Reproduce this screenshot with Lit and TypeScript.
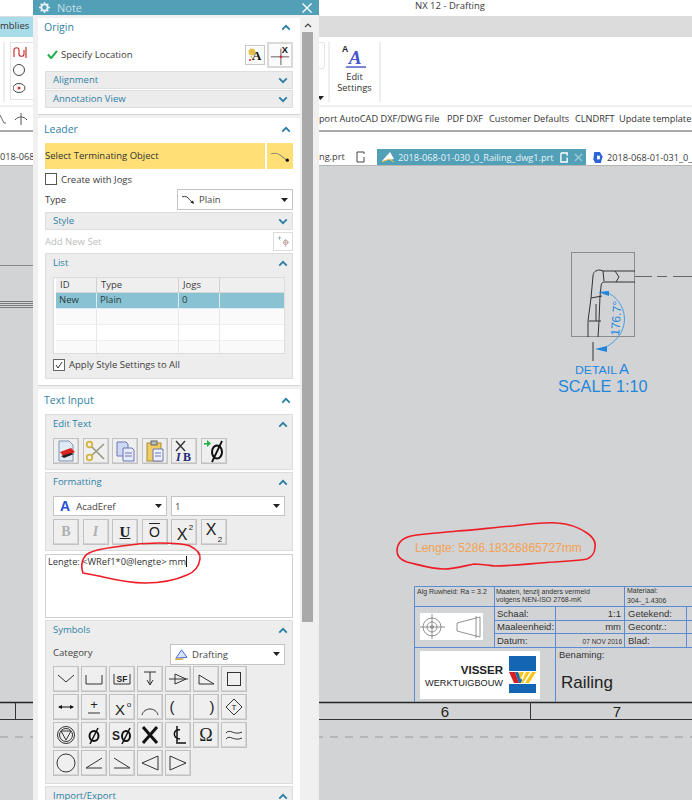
import { LitElement, html, css, svg } from "lit";
import { customElement } from "lit/decorators.js";

const up = html`<svg class="chev" viewBox="0 0 12 8" width="10" height="7"><path d="M1.500 6.500 6 2l4.500 4.500" fill="none" stroke="#2b7fa3" stroke-width="2.200"/></svg>`;
const down = html`<svg class="chev" viewBox="0 0 12 8" width="10" height="7"><path d="M1.500 1.500 6 6l4.500-4.500" fill="none" stroke="#2b7fa3" stroke-width="2.200"/></svg>`;
const caret = html`<svg class="caret" viewBox="0 0 7 4" width="7" height="4"><path d="M0 0h7L3.500 4z" fill="#222"/></svg>`;

const s = (body: unknown, sz = 26) => html`<svg viewBox="0 0 26 26" width=${sz} height=${sz}>${body}</svg>`;

const editIcons = [
  svg`<path d="M6 3h10l4 4v16H6z" fill="#dfeaf5" stroke="#7d93b5"/><path d="M7 14l11-4 4 4-11 5z" fill="#d22"/><path d="M8 18l10-3 3 1-10 4z" fill="#222"/>`,
  svg`<path d="M8 18 21 6M8 8l13 13" stroke="#9a9a80" stroke-width="1.600" fill="none"/><circle cx="6.500" cy="19.500" r="2.800" fill="none" stroke="#d4b53c" stroke-width="1.700"/><circle cx="6.500" cy="6.500" r="2.800" fill="none" stroke="#d4b53c" stroke-width="1.700"/>`,
  svg`<path d="M5 4h9l2 2v12H5z" fill="#cfd8f2" stroke="#6a77b5"/><path d="M11 10h9l2 2v11H11z" fill="#e6ebfa" stroke="#6a77b5"/><path d="M13 15h7M13 18h7" stroke="#6a77b5"/>`,
  svg`<rect x="5" y="5" width="14" height="18" fill="#f0cd62" stroke="#a88b2c"/><rect x="9" y="3" width="6" height="4" fill="#bbb" stroke="#666"/><path d="M11 11h10v12H11z" fill="#eef1fb" stroke="#6a77b5"/><path d="M13 15h6M13 18h6" stroke="#6a77b5"/>`,
  svg`<path d="M5 3l9 10M14 3 5 13" stroke="#333" stroke-width="1.400"/><text x="5" y="23" font-family="Liberation Serif" font-style="italic" font-weight="700" font-size="12" fill="#1c2a78">I</text><text x="12" y="23" font-family="Liberation Serif" font-weight="700" font-size="12" fill="#1c2a78">B</text>`,
  svg`<path d="M3 5h3V2l4 3.500L6 9V6.500H3z" fill="#22b14c"/><ellipse cx="16" cy="14" rx="5" ry="6.500" fill="none" stroke="#111" stroke-width="2"/><path d="M21 3 11 24" stroke="#111" stroke-width="1.800"/>`,
];

const glyph = (t: string, size = 14, weight = 400, fam = "Liberation Sans", dy = 18, x = 13) =>
  svg`<text x=${x} y=${dy} text-anchor="middle" font-family=${fam} font-size=${size} font-weight=${weight} fill="#222">${t}</text>`;

const symbols = [
  svg`<path d="M5 9l8 7 8-7" fill="none" stroke="#333"/>`,
  svg`<path d="M5 9v9h16V9" fill="none" stroke="#333"/>`,
  svg`<path d="M5 8v10h16V8" fill="none" stroke="#333"/>${glyph("SF", 8.500, 700, "Liberation Sans", 16)}`,
  svg`<path d="M7 6h12M13 6v13M10 14l3 5 3-5" fill="none" stroke="#333"/>`,
  svg`<path d="M4 13h19M10 8v10l11-5z" fill="none" stroke="#333"/>`,
  svg`<path d="M6 18V9l15 9z" fill="none" stroke="#333"/>`,
  svg`<rect x="6.500" y="6.500" width="13" height="13" fill="none" stroke="#333"/>`,
  svg`<path d="M6 13h14" stroke="#111"/><path d="M5 13l4-2v4zM21 13l-4-2v4z" fill="#111"/>`,
  svg`${glyph("+", 13, 400, "Liberation Sans", 15)}<path d="M7 19h12" stroke="#333"/>`,
  svg`${glyph("X", 15, 400, "Liberation Sans", 21, 11)}${glyph("o", 8, 400, "Liberation Sans", 13, 20)}`,
  svg`<path d="M5 21c2-8 14-8 16 0" fill="none" stroke="#333"/>`,
  svg`${glyph("(", 15, 400, "Liberation Sans", 18, 7)}`,
  svg`${glyph(")", 15, 400, "Liberation Sans", 18, 19)}`,
  svg`<path d="M13 5l8 8-8 8-8-8z" fill="none" stroke="#333"/>${glyph("T", 8, 400, "Liberation Sans", 16)}`,
  svg`<circle cx="13" cy="13" r="8.500" fill="none" stroke="#333"/><circle cx="13" cy="13" r="6.500" fill="none" stroke="#333"/><path d="M8 9h10l-5 9z" fill="none" stroke="#333"/>`,
  svg`<ellipse cx="13" cy="14" rx="4.500" ry="5" fill="none" stroke="#111" stroke-width="2"/><path d="M17 6 9 22" stroke="#111" stroke-width="1.500"/>`,
  svg`${glyph("S", 12, 700, "Liberation Sans", 18, 7)}<ellipse cx="17" cy="14" rx="4" ry="5" fill="none" stroke="#111" stroke-width="2"/><path d="M21 6l-8 16" stroke="#111" stroke-width="1.500"/>`,
  svg`<path d="M6 5l14 16M20 5 6 21" stroke="#111" stroke-width="3"/>`,
  svg`<path d="M15 8c-6-2-9 8 0 9M12 4v18M13 21h8" fill="none" stroke="#111" stroke-width="1.500"/>`,
  svg`${glyph("Ω", 18, 400, "Liberation Serif", 19)}`,
  svg`<path d="M5 11c4-5 8 3 16-1M5 17c4-5 8 3 16-1" fill="none" stroke="#333"/>`,
  svg`<circle cx="13" cy="13" r="9" fill="none" stroke="#333"/>`,
  svg`<path d="M21 8 5 18h16" fill="none" stroke="#333"/>`,
  svg`<path d="M5 8l16 10H5" fill="none" stroke="#333"/>`,
  svg`<path d="M21 6v14L5 13z" fill="none" stroke="#333"/>`,
  svg`<path d="M5 6v14l16-7z" fill="none" stroke="#333"/>`,
];

const leaderIcon = html`<svg viewBox="0 0 24 12" width="22" height="11"><path d="M2 3c4-1 8-1 11 2l6 5" fill="none" stroke="#8d8d6a" stroke-width="1.200"/><circle cx="20" cy="10" r="1.800" fill="#111"/></svg>`;
const plainIcon = html`<svg viewBox="0 0 16 12" width="15" height="11"><path d="M1 3c4-1 6 0 8 3l4 4" fill="none" stroke="#222"/><path d="M10 9l4 2-1-4z" fill="#222"/></svg>`;

@customElement("app-root")
export class AppRoot extends LitElement {
  static styles = css`
    :host { display: block; position: relative; width: 692px; height: 800px; overflow: hidden; background: #d2d3d5;
      font-family: "Open Sans", "Noto Sans", sans-serif; font-size: 9.5px; color: #3b3b3b; }
    .app { display: flex; flex-direction: column; height: 800px; }
    .title { height: 16px; background: #fff; display: flex; justify-content: center; padding-left: 208px; line-height: 11px; font-size: 9.500px; flex: none; }
    .tabsband { height: 21px; background: #dcdcdc; flex: none; display: flex; }
    .menuTab { width: 33px; height: 20px; margin-top: 1px; background: #a9dce9; font-size: 9.500px; line-height: 18px; overflow: hidden; white-space: nowrap; color: #333; }
    .ribbon { height: 70px; background: #fff; flex: none; display: flex; box-sizing: border-box; border-bottom: 2px solid #f0f0f0; }
    .leftGroup { width: 33px; flex: none; padding: 5px 0 3px 3px; box-sizing: border-box; }
    .leftBox { height: 100%; border-left: 2px solid #eee; padding-left: 5px; }
    .leftInner { border: 1px solid #e3e3e3; border-right: 0; height: 58px; display: flex; flex-direction: column; justify-content: space-between; padding: 3px 0 5px 2px; box-sizing: border-box; }
    .rightGroup { margin-left: 286px; display: flex; flex: 1; padding: 5px 0 3px; position: relative; }
    .stubwrap { width: 6px; flex: none; display: flex; flex-direction: column; justify-content: space-between; align-items: flex-start; }
    .stub { width: 6px; height: 27px; box-sizing: border-box; border: 1px solid #e5e5e5; border-left: 0; border-radius: 0 3px 3px 0; }
    .stubwrap .caret { margin: 0 0 2px -2px; }
    .sep { width: 2px; background: #eee; margin-left: 3px; flex: none; }
    .sep2 { margin-left: 0; }
    .editSet { width: 49px; flex: none; display: flex; flex-direction: column; align-items: center; font-size: 9.300px; line-height: 11px; text-align: center; color: #333; }
    .editSet svg { margin-bottom: 2px; }
    .tool { height: 23px; background: #fff; flex: none; border-bottom: 2px solid #a9a9a9; display: flex; align-items: center; white-space: nowrap; font-size: 9.200px; color: #333; box-sizing: content-box; }
    .toolLeft { width: 33px; flex: none; display: flex; gap: 8px; align-items: center; }
    .toolRight { margin-left: 286px; display: flex; flex: none; }
    .toolRight span { flex: none; }
    .toolRight span:nth-child(1) { width: 128px; }
    .toolRight span:nth-child(2) { width: 42px; }
    .toolRight span:nth-child(3) { width: 86px; }
    .toolRight span:nth-child(4) { width: 44px; }
    .docs { height: 34px; background: #fff; flex: none; display: flex; align-items: flex-end; font-size: 9.200px; white-space: nowrap; box-sizing: border-box; border-bottom: 1px solid #b5b5b5; overflow: hidden; }
    .dleft { width: 33px; flex: none; height: 16px; overflow: hidden; line-height: 15px; }
    .dmid { margin-left: 286px; flex: none; width: 58px; height: 16px; display: flex; gap: 11px; line-height: 15px; }
    .dactive { width: 209px; flex: none; height: 16px; background: #52a0b8; color: #e8f3f6; display: flex; align-items: center; padding-left: 4px; box-sizing: border-box; gap: 3px; }
    .dnext { display: flex; flex: none; align-items: center; height: 16px; gap: 3px; padding-left: 6px; }
    .canvas { flex: 1; background: #d2d3d5; position: relative; }
    .canvas svg { display: block; }

    .dialog { position: absolute; left: 33px; top: 0; width: 286px; height: 800px; background: #f0f0f0; display: flex; flex-direction: column; overflow: hidden; }
    .dtitle { height: 15px; background: #52a0b8; color: #c8dfe7; display: flex; align-items: center; padding-left: 6px; gap: 7px; font-size: 11px; flex: none; position: relative; }
    .dclose { margin-left: auto; margin-right: 7px; }
    .dbody { display: flex; padding: 3px 6px 0 5px; gap: 2px; flex: 1; min-height: 0; }
    .content { width: 262px; flex: none; display: flex; flex-direction: column; }
    .scroll { width: 11px; flex: none; }
    .sarrow { height: 14px; display: flex; justify-content: center; align-items: center; }
    .sthumb { height: 590px; background: #a9a9a9; }
    .sec { background: #fff; padding: 0 7px; box-sizing: border-box; border-bottom: 1px solid #d4d4d4; flex: none; }
    .sec + .sec { margin-top: 3px; }
    .sechead { display: flex; justify-content: space-between; align-items: center; color: #2f81a5; font-size: 10.500px; padding-right: 2px; margin-left: -1px; }
    .sechead span { padding-bottom: 4px; }
    .sechead .chev { margin-bottom: 2px; }
    .origin { height: 97px; }
    .origin .sechead { height: 20px; }
    .origin .sechead span { padding-bottom: 2px; }
    .locrow { height: 33px; display: flex; align-items: center; gap: 3px; padding-left: 2px; }
    .locrow .grow { flex: 1; }
    .ibtn { box-sizing: border-box; background: #fbfbfb; border: 1px solid #c9c9c9; display: flex; align-items: center; justify-content: center; flex: none; }
    .ia { width: 20px; height: 20px; margin-right: -1px; }
    .ix { width: 26px; height: 26px; border-width: 2px; border-color: #d9d9d9; }
    .strip { height: 18px; box-sizing: border-box; background: #ececec; border: 1px solid #dedede; color: #2f81a5; display: flex; align-items: center; justify-content: space-between; padding: 0 4px 0 7px; margin-bottom: 1px; font-size: 9.500px; }
    .strip span { padding-bottom: 2px; }
    .leader { height: 268px; }
    .leader .sechead, .textin .sechead { height: 25px; }
    .selrow { display: flex; gap: 2px; height: 26px; }
    .selbar { flex: 1; background: #ffdf76; display: flex; align-items: center; color: #333; padding-bottom: 2px; box-sizing: border-box; }
    .selbtn { width: 26px; background: #ffdf76; display: flex; align-items: center; justify-content: center; }
    .chk { height: 20px; display: flex; align-items: center; gap: 4px; }
    .box { width: 10px; height: 10px; border: 1px solid #555; background: #fff; flex: none; position: relative; display: block; }
    .typerow { height: 21px; display: flex; align-items: center; justify-content: space-between; margin-bottom: 2px; }
    .sel { box-sizing: border-box; background: #fff; border: 1px solid #c4c4c4; display: flex; align-items: center; gap: 3px; padding: 0 4px 0 3px; height: 100%; color: #444; }
    .sel .caret { margin-left: auto; }
    .typerow .sel { width: 116px; }
    .addrow { height: 19px; display: flex; align-items: center; justify-content: space-between; color: #bdbdbd; margin-bottom: 2px; }
    .addbtn { width: 20px; height: 19px; border: 1px solid #ddd; background: #fff; box-sizing: border-box; display: flex; align-items: center; justify-content: center; }
    .panel { background: #ededed; border: 1px solid #dcdcdc; box-sizing: border-box; padding: 0 7px; }
    .panel .phead { display: flex; justify-content: space-between; align-items: center; height: 18px; color: #2f81a5; margin-right: -3px; }
    .panel .phead span { padding-bottom: 2px; }
    .list { height: 126px; }
    .table { margin-top: 5px; height: 77px; background: #fff; border: 1px solid #dcdcdc; box-sizing: border-box; padding: 0 2px; overflow: hidden; }
    .tr { display: grid; grid-template-columns: 41px 82px 41px 65px; }
    .tr > div { border-right: 1px solid #e8e8e8; padding-left: 4px; box-sizing: border-box; line-height: 14px; height: 16px; border-bottom: 1px solid #eee; }
    .th > div { background: #efefef; border-color: #d6d6d6; border-right-color: #d0d0d0; height: 15px; }
    .tsel > div { background: #89c3d3; border-color: #dcecf0; padding-left: 3px; color: #2d3c42; }
    .tr2 > div { background: #fafafa; }
    .listchk { height: 22px; margin-top: 0; padding-bottom: 1px; box-sizing: border-box; }
    .listchk .box { border-color: #666; }
    .tick { position: absolute; left: 1px; top: 1px; }
    .textin { height: 430px; }
    .textin .panel { margin-bottom: 2px; }
    .editp { height: 56px; }
    .btns { display: flex; gap: 3.500px; margin-top: 5px; }
    .tb { width: 26px; height: 26px; box-sizing: border-box; background: #efefef; border: 1px solid #c2c2c2; box-shadow: inset -1px -1px 0 #d4d4d4; display: flex; align-items: center; justify-content: center; flex: none; overflow: hidden; font-family: "Liberation Serif", serif; }
    .tb svg { flex: none; margin: -1px; }
    .fmtp { height: 79px; margin-bottom: 3px !important; }
    .selpair { display: flex; gap: 4px; height: 20px; margin-top: 5px; }
    .selpair .sel { width: 114px; }
    .bigA { color: #2750d8; font-family: "Liberation Sans", sans-serif; font-weight: 700; font-size: 14px; margin: 0 3px 0 3px; }
    .fmtb { margin-top: 3px; }
    .dis { color: #b0b0b0; font-weight: 700; font-size: 14px; }
    .fmt { color: #222; font-size: 16px; font-family: "Liberation Sans", sans-serif; position: relative; }
    .fmtU { font-family: "Liberation Serif", serif; font-weight: 700; font-size: 15px; text-decoration: underline; }
    .fmtO { text-decoration: overline; font-size: 14px; }
    .area { height: 64px; background: #fff; border: 1px solid #cfcfcf; box-sizing: border-box; margin-bottom: 2px; padding: 0 2px; color: #333; line-height: 13px; white-space: nowrap; font-size: 9.300px; }
    .cursor { display: inline-block; width: 1px; height: 11px; background: #111; vertical-align: -2px; }
    .symp { height: 164px; }
    .catrow { height: 22px; margin-top: 4px; display: flex; align-items: center; justify-content: space-between; margin-bottom: 1px; font-size: 9.500px; color: #444; }
    .catrow > span { padding-bottom: 3px; }
    .catrow .sel { width: 115px; height: 21px; }
    .grid { display: grid; grid-template-columns: repeat(7, 26px); gap: 2px; }
    .imp { height: 30px; }
    .over { position: absolute; left: 0; top: 0; pointer-events: none; }
  `;

  render() {
    const dw = "Liberation Sans";
    const bl = "#5b8bd2";
    return html`
      <div class="app">
        <div class="title">NX 12 - Drafting</div>
        <div class="tabsband"><div class="menuTab">mblies</div></div>
        <div class="ribbon">
          <div class="leftGroup"><div class="leftBox"><div class="leftInner">
            <svg viewBox="0 0 20 12" width="20" height="12"><path d="M1 11V4c0-3 5-3 5 0v4c0 3 5 3 5 0V4" fill="none" stroke="#c33" stroke-width="1.200"/><path d="M13 1v11" stroke="#c33" stroke-width="1.200"/></svg>
            <svg viewBox="0 0 20 14" width="20" height="14"><circle cx="6" cy="7" r="5.500" fill="none" stroke="#444"/></svg>
            <svg viewBox="0 0 20 12" width="20" height="12"><ellipse cx="6" cy="6" rx="6" ry="4.500" fill="none" stroke="#444"/><circle cx="6" cy="6" r="1.500" fill="#d33"/></svg>
          </div></div></div>
          <div class="rightGroup">
            <div class="stubwrap"><div class="stub"></div>${caret}</div>
            <div class="sep"></div>
            <div class="editSet">
              <svg viewBox="0 0 26 28" width="25" height="27"><text x="0" y="10" font-family="Liberation Sans" font-weight="700" font-size="9" fill="#222">A</text><text x="7" y="23" font-family="Liberation Serif" font-style="italic" font-weight="700" font-size="20" fill="#4a55c8">A</text><path d="M4 26h21" stroke="#4a55c8" stroke-width="1.500"/></svg>
              <span>Edit<br />Settings</span>
            </div>
            <div class="sep sep2"></div>
          </div>
        </div>
        <div class="tool">
          <div class="toolLeft">
            <svg viewBox="0 0 6 12" width="6" height="12"><path d="M0 2l4 8h2" fill="none" stroke="#666"/></svg>
            <svg viewBox="0 0 14 14" width="14" height="14"><path d="M1 8c3-4 9-4 12 0M7 1v12" fill="none" stroke="#555"/></svg>
          </div>
          <div class="toolRight"><span>port AutoCAD DXF/DWG File</span><span>PDF DXF</span><span>Customer Defaults</span><span>CLNDRFT</span><span>Update template</span></div>
        </div>
        <div class="docs">
          <div class="dleft">018-068-</div>
          <div class="dmid"><span>ng.prt</span><svg viewBox="0 0 10 12" width="10" height="12" style="margin-top:2px"><path d="M1 1h7v2M1 1v10h7V6" fill="none" stroke="#444"/></svg></div>
          <div class="dactive">
            <svg viewBox="0 0 14 14" width="14" height="14"><path d="M1 11l8-9 4 7z" fill="#fff"/><path d="M1 12l7-3 5 3" stroke="#e9c13f" fill="none"/></svg>
            <span>2018-068-01-030_0_Railing_dwg1.prt</span>
            <svg viewBox="0 0 10 12" width="9" height="11" style="margin-left:3px"><path d="M1 1h7v3M1 1v10h7V6" fill="none" stroke="#fff" stroke-width="1.500"/></svg>
            <svg viewBox="0 0 10 10" width="9" height="9" style="margin-left:2px"><path d="M1 1l8 8M9 1 1 9" stroke="#9cc9d6" stroke-width="1.500"/></svg>
          </div>
          <div class="dnext">
            <svg viewBox="0 0 12 14" width="12" height="13"><path d="M2 1h6l3 5-2 7H3L1 9z" fill="#2b63d9"/><path d="M5 5h3v4H5z" fill="#fff"/></svg>
            <span>2018-068-01-031_0_</span>
          </div>
        </div>
        <div class="canvas">
          <svg viewBox="0 167 692 633" width="692" height="633">
            <path d="M0 266.500h33" stroke="#888" />
            <path d="M0 302.500h33M0 304.500h33M0 306.500h33M0 308.500h33" stroke="#555" stroke-width=".7"/>
            <path d="M0 703.500h692" stroke="#222" stroke-width="1.500"/>
            <path d="M0 720.500h692" stroke="#333"/>
            <path d="M15.500 703v17M530.500 703v17" stroke="#333"/>
            <path d="M0 738h692" stroke="#999" stroke-dasharray="8 7"/>
            <text x="445" y="718" text-anchor="middle" font-family=${dw} font-size="15" fill="#222">6</text>
            <text x="617" y="718" text-anchor="middle" font-family=${dw} font-size="15" fill="#222">7</text>

            <rect x="571.500" y="253.500" width="63" height="84" fill="none" stroke="#8b8b8b"/>
            <path d="M635 277.500h17M657 277.500h10M673 277.500h19" stroke="#666"/>
            <path d="M635 272h-32l-3-1c-4 0-7 2-7 6l-2 22-3 23v16M635 283h-31c-2 0-3 2-3 5l-1 9-1 25-1 16M603 272l1 10M615 272l4 6-3 5M591 299l11-2M589 322h12M596 305v17M593 343v19" fill="none" stroke="#333"/>
            <path d="M606 293c21 8 28 40 0 55" fill="none" stroke="#47a0e0"/>
            <path d="M598 293l11-1v5zM595 350l12-3v6z" fill="#1f86dc"/>
            <text transform="translate(619 337) rotate(-86)" font-family=${dw} font-size="12" fill="#1f86dc">176.7°</text>
            <text x="575" y="375" font-family=${dw} font-size="11" fill="#1f86dc" textLength="42" lengthAdjust="spacingAndGlyphs">DETAIL</text>
            <text x="619" y="375" font-family=${dw} font-size="15" fill="#1f86dc">A</text>
            <text x="558" y="393" font-family=${dw} font-size="16.300" fill="#1f86dc">SCALE 1:10</text>

            <text x="415" y="553" font-family=${dw} font-size="12" fill="#f2a252">Lengte: 5286.18326865727mm</text>
            <path d="M397 552c0-9 6-13 14-15 18-3 30-3 46-5 20-1 38-4 56-5 16-2 34-4 44-3 14 1 23 5 30 10 6 4 9 8 8 14 0 5-3 10-8 12-11 2-22 2-33 3-20 1-40 4-60 4-7-1-13-2-20-2-10 2-20 5-30 5-13 0-24-4-37-7-6-2-10-6-10-11z" fill="none" stroke="#ee1c25" stroke-width="1.600"/>

            <g fill="none" stroke=${bl}>
              <path d="M414.500 703V587.500H692M414.500 607.500H692M414.500 648.500H692M494.500 587.500v61M624.500 587.500v61M555.500 607.500V703M686.500 607.500v41M494.500 621.500H692M494.500 634.500H692"/>
            </g>
            <rect x="420" y="614" width="63" height="27" fill="#fff"/>
            <g fill="none" stroke="#777" stroke-width=".8">
              <circle cx="432" cy="628" r="9"/><circle cx="432" cy="628" r="5"/><circle cx="432" cy="628" r="1.500"/><path d="M420 628h25M432 615v25M457 624l23-6v20l-23-6zM476 617v22"/>
            </g>
            <rect x="420" y="652" width="120" height="48" fill="#fff"/>
            <text x="503" y="675" text-anchor="end" font-family=${dw} font-size="11.500" font-weight="700" fill="#222">VISSER</text>
            <text x="503" y="687" text-anchor="end" font-family=${dw} font-size="9.500" fill="#222" textLength="78" lengthAdjust="spacingAndGlyphs">WERKTUIGBOUW</text>
            <rect x="509" y="657" width="27" height="15" fill="#1565b5"/>
            <rect x="509" y="685" width="27" height="9" fill="#1565b5"/>
            <path d="M509 673h6l4 11h-5z" fill="#d92020"/>
            <path d="M515 673h3l4 8-1 3h-2z" fill="#1565b5"/>
            <path d="M519 673h5l-4 8zM526 673h4l-7 11h-2zM532 673h4l-7 11h-4z" fill="#f5c518"/>
            <g font-family=${dw} fill="#333">
              <text x="417" y="595" font-size="7">Alg Ruwheid: Ra = 3.2</text>
              <text x="496" y="595" font-size="7">Maaten, tenzij anders vermeld</text>
              <text x="496" y="603" font-size="7">volgens NEN-ISO 2768-mK</text>
              <text x="627" y="594" font-size="7">Materiaal:</text>
              <text x="627" y="604" font-size="7">304-_1.4306</text>
              <text x="497" y="618" font-size="9.500">Schaal:</text>
              <text x="621" y="618" font-size="9.500" text-anchor="end">1:1</text>
              <text x="628" y="618" font-size="9.500">Getekend:</text>
              <text x="497" y="631" font-size="9.500">Maaleenheid:</text>
              <text x="621" y="631" font-size="9.500" text-anchor="end">mm</text>
              <text x="628" y="631" font-size="9.500">Gecontr.:</text>
              <text x="497" y="645" font-size="9.500">Datum:</text>
              <text x="622" y="645" font-size="6.500" text-anchor="end">07 NOV 2016</text>
              <text x="628" y="645" font-size="9.500">Blad:</text>
              <text x="559" y="659" font-size="9.500">Benaming:</text>
              <text x="561" y="689" font-size="17" fill="#222">Railing</text>
            </g>
          </svg>
        </div>
      </div>

      <div class="dialog">
        <div class="dtitle">
          <svg viewBox="0 0 12 12" width="11" height="11"><circle cx="6" cy="6" r="3.500" fill="none" stroke="#e6f1f4" stroke-width="2.200"/><path d="M6 0v2M6 10v2M0 6h2M10 6h2M1.800 1.800l1.400 1.400M8.800 8.800l1.400 1.400M1.800 10.200l1.400-1.400M8.800 3.200l1.400-1.400" stroke="#e6f1f4" stroke-width="1.600"/></svg>
          <span>Note</span>
          <svg class="dclose" viewBox="0 0 10 10" width="10" height="10"><path d="M.5.500l9 9M9.500.500l-9 9" stroke="#fff" stroke-width="1.400"/></svg>
        </div>
        <div class="dbody">
          <div class="content">
            <div class="sec origin">
              <div class="sechead"><span>Origin</span>${up}</div>
              <div class="locrow">
                <svg viewBox="0 0 12 10" width="11" height="9"><path d="M1 5l3.500 4L11 1" fill="none" stroke="#22b14c" stroke-width="2.400"/></svg>
                <span>Specify Location</span>
                <div class="grow"></div>
                <div class="ibtn ia"><svg viewBox="0 0 18 18" width="18" height="18"><circle cx="6" cy="6" r="3.500" fill="#e3c04c"/><path d="M5 10l2 4" stroke="#c9a030"/><circle cx="4" cy="14" r="1" fill="#d22"/><text x="6" y="14" font-family="Liberation Serif" font-weight="700" font-size="13" fill="#111">A</text></svg></div>
                <div class="ibtn ix"><svg viewBox="0 0 24 24" width="24" height="24"><path d="M2 14h20M13 5v18" stroke="#555"/><circle cx="13" cy="14" r="1.400" fill="#d22"/><text x="14" y="10" font-family="Liberation Sans" font-weight="700" font-size="10" fill="#111">X</text></svg></div>
              </div>
              <div class="strip"><span>Alignment</span>${down}</div>
              <div class="strip"><span>Annotation View</span>${down}</div>
            </div>

            <div class="sec leader">
              <div class="sechead"><span>Leader</span>${up}</div>
              <div class="selrow"><div class="selbar">Select Terminating Object</div><div class="selbtn">${leaderIcon}</div></div>
              <div class="chk"><span class="box"></span>Create with Jogs</div>
              <div class="typerow"><span>Type</span><div class="sel">${plainIcon}<span>Plain</span>${caret}</div></div>
              <div class="strip" style="margin-bottom:2px"><span>Style</span>${down}</div>
              <div class="addrow"><span>Add New Set</span><div class="addbtn"><svg viewBox="0 0 16 14" width="14" height="13"><path d="M8 8h7M11 4v9" stroke="#c5a9a9"/><circle cx="11" cy="8" r="2.500" fill="none" stroke="#b99"/><path d="M2 3h4M4 1v4" stroke="#9ab"/></svg></div></div>
              <div class="panel list">
                <div class="phead"><span>List</span>${up}</div>
                <div class="table">
                  <div class="tr th"><div>ID</div><div>Type</div><div>Jogs</div><div></div></div>
                  <div class="tr tsel"><div>New</div><div>Plain</div><div>0</div><div></div></div>
                  <div class="tr tr2"><div></div><div></div><div></div><div></div></div>
                  <div class="tr"><div></div><div></div><div></div><div></div></div>
                  <div class="tr tr2"><div></div><div></div><div></div><div></div></div>
                </div>
                <div class="chk listchk"><span class="box"><svg class="tick" viewBox="0 0 8 8" width="8" height="8"><path d="M1 4l2 3 4-6" fill="none" stroke="#333"/></svg></span>Apply Style Settings to All</div>
              </div>
            </div>

            <div class="sec textin">
              <div class="sechead"><span>Text Input</span>${up}</div>
              <div class="panel editp">
                <div class="phead"><span>Edit Text</span>${up}</div>
                <div class="btns">${editIcons.map((i) => html`<div class="tb">${s(i)}</div>`)}</div>
              </div>
              <div class="panel fmtp">
                <div class="phead"><span>Formatting</span>${up}</div>
                <div class="selpair">
                  <div class="sel"><span class="bigA">A</span><span>AcadEref</span>${caret}</div>
                  <div class="sel"><span>1</span>${caret}</div>
                </div>
                <div class="btns fmtb">
                  <div class="tb dis">B</div>
                  <div class="tb dis" style="font-style:italic">I</div>
                  <div class="tb fmt fmtU">U</div>
                  <div class="tb fmt fmtO">O</div>
                  <div class="tb fmt">${s(svg`${glyph("X", 16, 400, "Liberation Sans", 21, 11)}${glyph("2", 8, 400, "Liberation Sans", 11, 20)}`)}</div>
                  <div class="tb fmt">${s(svg`${glyph("X", 16, 400, "Liberation Sans", 16, 10)}${glyph("2", 8, 400, "Liberation Sans", 23, 19)}`)}</div>
                </div>
              </div>
              <div class="area">Lengte: &lt;WRef1*0@lengte&gt; mm<span class="cursor"></span></div>
              <div class="panel symp">
                <div class="phead"><span>Symbols</span>${up}</div>
                <div class="catrow">
                  <span>Category</span>
                  <div class="sel">
                    <svg viewBox="0 0 16 14" width="15" height="13"><path d="M2 11 8 2l6 8z" fill="#d7e3fb" stroke="#3a5fd8"/><path d="M1 12h9" stroke="#d4ad2e" stroke-width="1.600"/></svg>
                    <span>Drafting</span>${caret}
                  </div>
                </div>
                <div class="grid">${symbols.map((i) => html`<div class="tb">${s(i)}</div>`)}</div>
              </div>
              <div class="panel imp"><div class="phead"><span>Import/Export</span>${up}</div></div>
            </div>
          </div>
          <div class="scroll">
            <div class="sarrow"><svg viewBox="0 0 8 5" width="8" height="5"><path d="M1 4l3-3 3 3" fill="none" stroke="#444" stroke-width="1.200"/></svg></div>
            <div class="sthumb"></div>
          </div>
        </div>
      </div>

      <svg class="over" viewBox="0 0 692 800" width="692" height="800">
        <path d="M83 573c-3-9 0-17 6-20 8-4 20-5 33-7 12-2 26-3 37-3 12 0 24 0 31 3 6 3 11 7 10 13-1 7-5 13-13 16-9 4-25 8-42 8-14 0-29-3-42-6-8-2-16-3-20-4z" fill="none" stroke="#ee1c25" stroke-width="1.600"/>
      </svg>
    `;
  }
}
